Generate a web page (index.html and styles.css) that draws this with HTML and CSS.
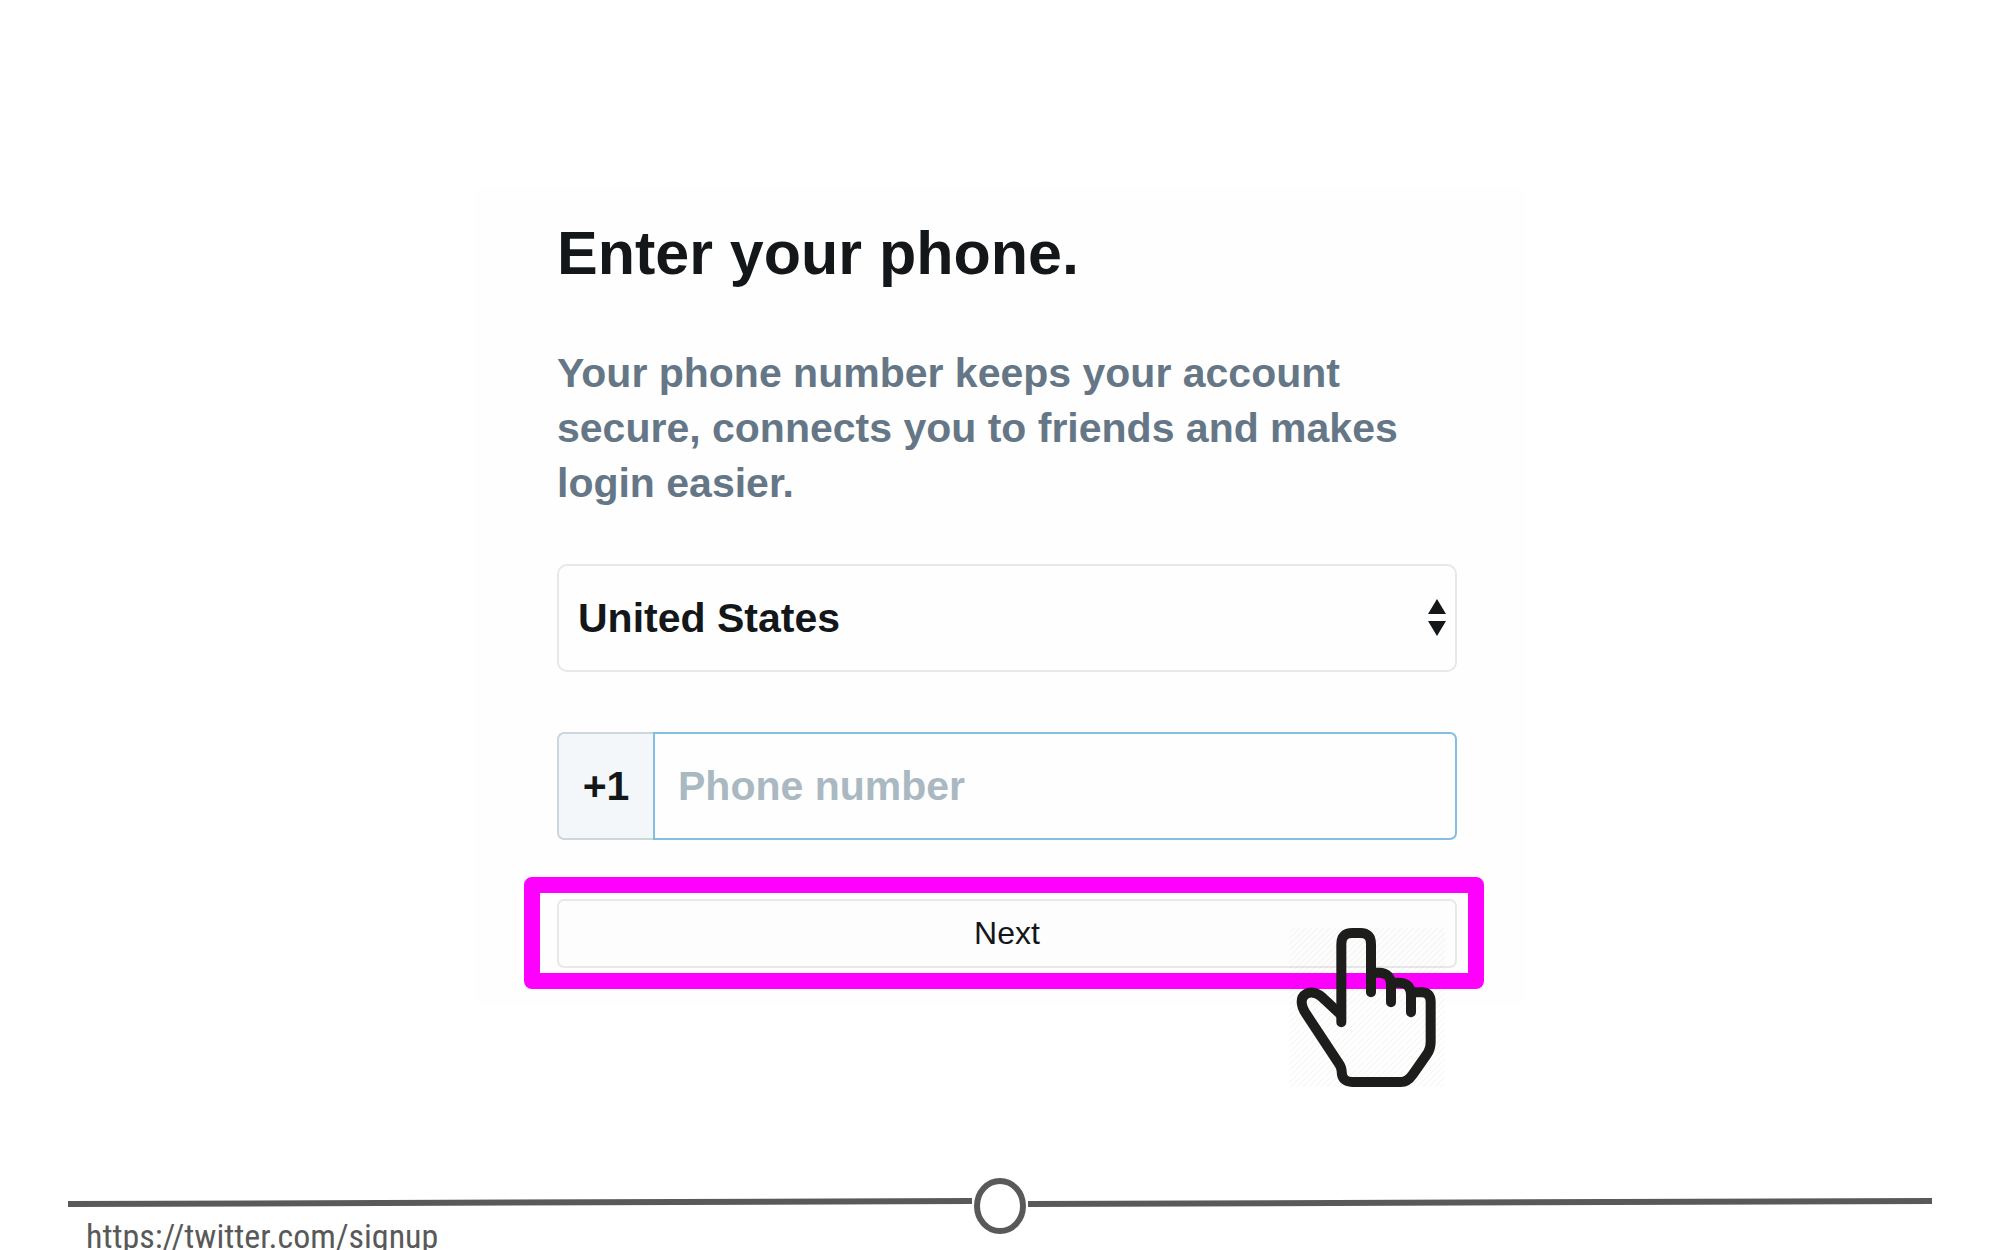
FILE: index.html
```html
<!DOCTYPE html>
<html lang="en">
<head>
<meta charset="utf-8">
<meta name="viewport" content="width=device-width, initial-scale=1">
<title>Enter your phone</title>
<link rel="stylesheet" href="styles.css">
</head>
<body>
<main class="slide">
  <form class="card">
    <h1 class="title">Enter your phone.</h1>
    <p class="intro">Your phone number keeps your account secure, connects you to friends and makes login easier.</p>
    <div class="country">
      <select class="country-select" aria-label="Country">
        <option>United States</option>
      </select>
      <svg class="country-arrows" viewBox="0 0 20 38" aria-hidden="true"><path d="M10 0 19 15H1ZM1 22H19L10 37Z"/></svg>
    </div>
    <div class="phone">
      <label class="phone-code" for="phone">+1</label>
      <input class="phone-input" id="phone" type="tel" placeholder="Phone number">
    </div>
    <div class="action">
      <button class="next" type="button">Next</button>
      <div class="highlight"></div>
      <svg class="hand" viewBox="88 204 468 477" aria-hidden="true">
        <defs>
          <pattern id="hatch" width="18" height="18" patternUnits="userSpaceOnUse">
            <path d="M0 18 18 0" stroke="#000" stroke-opacity=".05" stroke-width="3"/>
          </pattern>
        </defs>
        <rect x="88" y="204" width="468" height="477" fill="url(#hatch)"/>
        <g fill="none" stroke="#1d1d1b" stroke-width="30" stroke-linecap="round">
          <path d="M245 487V252Q245 219 278 219H302Q334 219 334 252V397"/>
          <path d="M340 338H358Q394 338 394 376V427"/>
          <path d="M404 368H420Q454 370 454 406V457"/>
          <path d="M464 397H486Q513 397 513 426V545Q513 567 501 584L458 645Q444 666 423 666H278Q246 666 246 634Q246 624 238 611L140 463Q126 442 126 425C126 404 148 392 168 400C180 404 188 412 196 420L240 461"/>
        </g>
      </svg>
    </div>
  </form>
</main>
<footer class="footer">
  <div class="rule">
    <svg class="rule-line" viewBox="0 0 904 58" preserveAspectRatio="none" aria-hidden="true"><path d="M0 27 904 24"/></svg>
    <svg class="rule-ring" viewBox="0 0 56 58" aria-hidden="true"><ellipse cx="28" cy="29" rx="23" ry="25"/></svg>
    <svg class="rule-line" viewBox="0 0 904 58" preserveAspectRatio="none" aria-hidden="true"><path d="M0 27 904 24"/></svg>
  </div>
  <a class="source" href="https://twitter.com/signup">https://twitter.com/signup</a>
</footer>
</body>
</html>
```
FILE: styles.css
```css
* {
  box-sizing: border-box;
}

body {
  margin: 0;
  height: 100vh;
  display: flex;
  flex-direction: column;
  overflow: hidden;
  background: #fff;
  color: #14171a;
  font-family: "Liberation Sans", Arial, sans-serif;
}

.slide {
  flex: 1;
  padding-top: 187px;
}

.card {
  width: 100%;
  max-width: 1050px;
  margin: 0 auto;
  padding: 30px 68px 37px 82px;
  background: #fefefe;
}

.title {
  margin: 0 0 57px;
  font-size: 61px;
  line-height: 72px;
}

.intro {
  margin: 0 0 53px;
  color: #657786;
  font-size: 41px;
  font-weight: bold;
  line-height: 55px;
}

.country {
  position: relative;
  margin-bottom: 60px;
}

.country-select {
  display: block;
  width: 100%;
  height: 108px;
  padding: 0 60px 0 19px;
  appearance: none;
  border: 2px solid #e8e8e8;
  border-radius: 10px;
  background: #fefefe;
  color: inherit;
  font: bold 41px "Liberation Sans", Arial, sans-serif;
}

.country-arrows {
  position: absolute;
  top: 35px;
  right: 10px;
  width: 20px;
  height: 38px;
  fill: #14171a;
  pointer-events: none;
}

.phone {
  display: flex;
  height: 108px;
  margin-bottom: 59px;
}

.phone-code {
  display: flex;
  align-items: center;
  justify-content: center;
  width: 96px;
  border: 2px solid #ccd6dd;
  border-right: 0;
  border-radius: 7px 0 0 7px;
  background: #f3f7f9;
  font-size: 41px;
  font-weight: bold;
}

.phone-input {
  flex: 1;
  min-width: 0;
  padding: 0 23px;
  border: 2px solid #84bee0;
  border-radius: 0 7px 7px 0;
  background: #fefefe;
  color: inherit;
  font: bold 41px "Liberation Sans", Arial, sans-serif;
}

.phone-input::placeholder {
  color: #aab8c2;
  opacity: 1;
}

.action {
  position: relative;
}

.next {
  display: block;
  width: 100%;
  height: 69px;
  border: 2px solid #e8e8e8;
  border-radius: 7px;
  background: #fdfdfd;
  color: inherit;
  font: 32px "Liberation Sans", Arial, sans-serif;
}

.highlight {
  position: absolute;
  inset: -22px -27px -21px -33px;
  border: 16px solid #f0f;
  border-radius: 8px;
  pointer-events: none;
}

.hand {
  position: absolute;
  top: 29px;
  right: 12px;
  width: 156px;
  height: 159px;
  pointer-events: none;
}

.footer {
  height: 73px;
  padding: 0 68px;
}

.rule {
  display: flex;
  height: 58px;
  fill: none;
  stroke: #595959;
  stroke-width: 6px;
}

.rule-line {
  flex: 1;
  min-width: 0;
  height: 58px;
}

.rule-ring {
  width: 56px;
  height: 58px;
}

.source {
  display: block;
  margin: -19px 0 0 18px;
  color: #595959;
  font-family: "Roboto Condensed", "Liberation Sans Narrow", Roboto, sans-serif;
  font-size: 34px;
  line-height: 40px;
  text-decoration: none;
}
```
